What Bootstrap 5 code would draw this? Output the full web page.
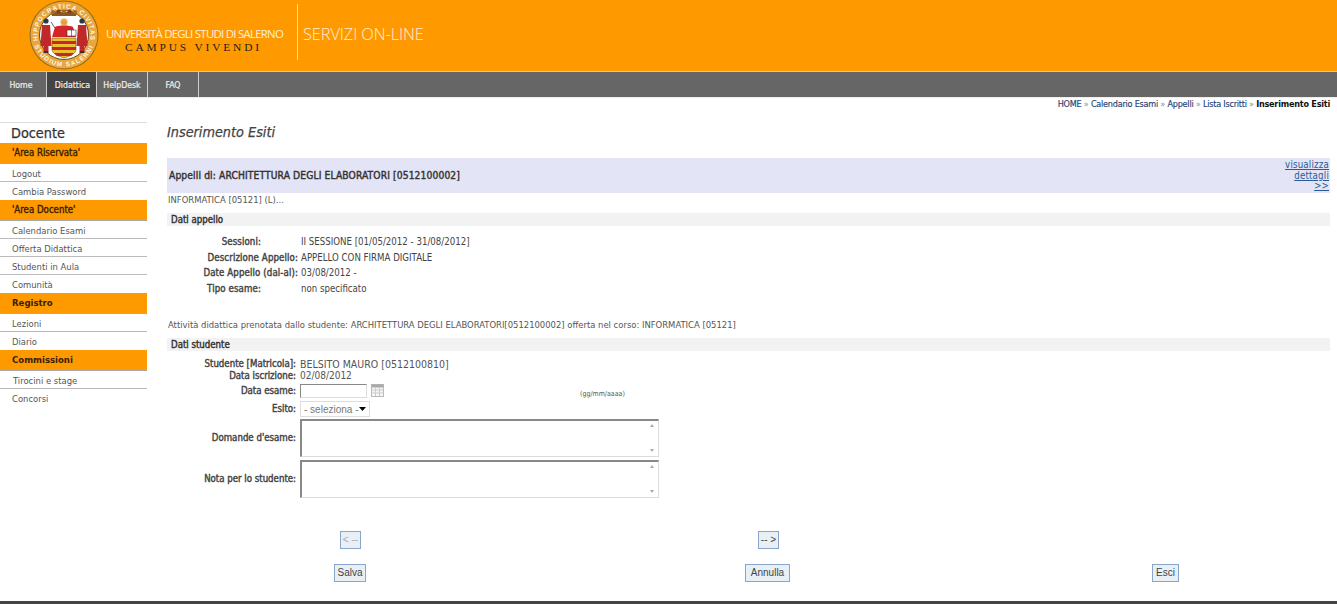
<!DOCTYPE html>
<html lang="it">
<head>
<meta charset="utf-8">
<title>Inserimento Esiti</title>
<link href="https://cdn.jsdelivr.net/npm/bootstrap@5.3.0/dist/css/bootstrap.min.css" rel="stylesheet">
<style>
html,body{height:604px;overflow:hidden}
body{font-family:"DejaVu Sans Condensed","DejaVu Sans",sans-serif;font-stretch:condensed;font-size:9.5px;line-height:1.2;color:#444;background:#fff;position:relative}
.site-head{height:71px;background:#f90;color:#fff0d6}
.crest{width:70px;height:70px;margin-left:29px;flex:none}
.uni-block{margin-left:7px;margin-top:7px;width:177px}
.uni-name{font-family:"Open Sans","Liberation Sans",sans-serif;font-stretch:normal;font-size:11.4px;line-height:14px;letter-spacing:-.72px;white-space:nowrap;font-weight:400}
.uni-motto{font-family:"Liberation Serif",serif;font-stretch:normal;font-size:11.4px;line-height:13px;letter-spacing:2.85px;color:#222;text-align:center;white-space:nowrap;padding-right:2px}
.head-rule{width:1px;height:56px;background:#ffdca6;margin:4px 5px 0 14px}
.service{font-family:"Open Sans","Liberation Sans",sans-serif;font-stretch:normal;font-size:16.4px;font-weight:300;margin-top:24px;letter-spacing:-.1px;white-space:nowrap}
.top-nav{height:27px;background:#666;border-top:1px solid #d8c9b0;border-bottom:1px solid #eee}
.top-nav .nav-link{height:25px;width:51px;padding:8px 0 0;text-align:center;color:#eee;font-size:8.7px;border-right:1px solid #ccc;-webkit-text-stroke:.2px #eee}
.top-nav .nav-link.first-tab{width:47px;padding-right:4px}
.top-nav .nav-link.active{background:#444;color:#eee;width:50px;padding-left:2px}
.crumbs{height:12px;padding-right:7px;font-size:9px;line-height:12px;text-align:right;color:#889;letter-spacing:-.22px;margin-top:0}
.crumbs a{color:#1f3f73;text-decoration:none;-webkit-text-stroke:.15px #1f3f73}
.crumbs b{color:#111}
.page-body{margin-top:12px}
.side{width:147px;flex:none;border-top:1px solid #ddd}
.side-title{height:20px;padding-left:11px;font-size:14.3px;line-height:20px;color:#333;-webkit-text-stroke:.25px #333}
.side-head{height:21px;padding:4px 0 0 12px;background:#f90;color:#3a2000;font-weight:700;font-size:9.5px;border-bottom:1px solid #aaa;line-height:12px}
.side-head.quoted{font-weight:400;-webkit-text-stroke:.35px #3a2000;font-size:9.6px}
.side-link{display:block;height:18px;padding:4px 0 0 12px;color:#555;text-decoration:none;font-size:9.4px;line-height:11px;border-bottom:1px solid #bbb}
.side-link.plain{border-bottom:0}
.side-link.shift{padding-left:13px}
.main-col{width:1163px;margin-left:20px}
.page-title{height:36px;font-size:14.3px;font-style:italic;line-height:21px;color:#444;-webkit-text-stroke:.25px #444}
.band{height:35px;background:#e3e4f5;padding-left:2px}
.band-title{font-size:10.2px;color:#333;padding-top:11px;line-height:13px;letter-spacing:.13px;-webkit-text-stroke:.4px #333}
.band-more{text-align:right;font-size:9.6px;line-height:10.7px;color:#2a5a96;padding:2px 1px 0 0;letter-spacing:.2px}
.band-more a{color:#2a5a96}
.course{height:20px;padding:0 0 0 1px;line-height:13px;font-size:9.4px;color:#555}
.sect{height:13px;background:#f2f2f2;padding-left:4px;color:#333;line-height:13px;font-size:9.6px;-webkit-text-stroke:.4px #333}
.rows-a{padding-top:8px}
.info-row{display:flex;height:15.7px;line-height:15.7px;font-size:9.6px;color:#444}
.info-row .lab{width:131px;text-align:right;color:#444;flex:none;letter-spacing:.12px;-webkit-text-stroke:.4px #444}
.info-row .lab.pad{padding-right:37px}
.info-row .val{margin-left:3px}
.long-line{margin-top:21px;height:20px;padding-left:1px;line-height:13px;font-size:9.4px;color:#555}
.first-form-row{margin-top:7px}
.form-lab{width:129px;flex:none;text-align:right;color:#444;font-size:9.6px;line-height:12px;-webkit-text-stroke:.4px #444}
.form-val{margin-left:4px;font-size:10.5px;color:#555;line-height:12px}
.form-val.small-val{font-size:10px}
.date-in{width:67px;height:14px;border:1px solid #888;border-right-color:#ddd;border-bottom-color:#ddd;background:#fff;display:block;padding:0}
.sel-in{width:70px;height:16px;border:1px solid #ddd;background:#fff url("data:image/svg+xml,%3Csvg xmlns='http://www.w3.org/2000/svg' width='7' height='4'%3E%3Cpath d='M0 0h7L3.500 4z' fill='%23000'/%3E%3C/svg%3E") no-repeat right 3px center;font:10px "Liberation Sans",sans-serif;color:#777;padding:0 0 0 3px;display:block;appearance:none;-webkit-appearance:none;border-radius:0}
.area-wrap{position:relative;width:359px}
.area-in{width:359px;height:38px;border:2px solid #888;border-right:1px solid #ddd;border-bottom:1px solid #ddd;display:block;background:#fff;padding:0;resize:none;border-radius:0}
.sb-up,.sb-down{position:absolute;right:5px;width:0;height:0;border-left:2.5px solid transparent;border-right:2.5px solid transparent}
.sb-up{top:5px;border-bottom:3px solid #aaa}
.sb-down{bottom:5px;border-top:3px solid #aaa}
.fmt{font-size:7px;color:#555;margin-left:196px;padding-top:6px}
.cal{margin-left:4px;margin-top:-2px}
.nav-btn{border:1px solid #8aa5cc;background:#e8f0f6;color:#444;font:10px "Liberation Sans",sans-serif;height:18px;padding:0;display:block;border-radius:0}
.nav-btn[disabled]{color:#aaa;border-color:#8aa5cc;background:#e8f0f6}
.btn-a{width:21px}.btn-b{width:32px}.btn-c{width:45px}.btn-d{width:27px}
.row-a{padding-left:173px;margin-top:31px}
.gap-a{width:397px;flex:none}
.row-b{padding-left:167px;margin-top:15px}
.gap-b{width:379px;flex:none}
.gap-c{width:362px;flex:none}
.foot-line{height:3px;background:#444;position:absolute;left:0;right:0;top:601px}
</style>
</head>
<body>
<header class="site-head d-flex">
<svg class="crest" viewBox="0 0 70 70" role="img" aria-label="Stemma">
<defs><path id="arcTop" d="M12.050 48.250A26.500 26.500 0 1 1 57.950 48.250"/><path id="arcBot" d="M3.500 35A31.500 31.500 0 0 0 66.500 35"/></defs>
<circle cx="35" cy="35" r="34.5" fill="#8f6a20"/>
<circle cx="35" cy="35" r="33.500" fill="#e8a63c"/>
<circle cx="35" cy="35" r="24.5" fill="#fff" stroke="#6a4c18" stroke-width="1"/>
<text font-family="Liberation Sans,sans-serif" font-size="6.4" font-weight="700" fill="#fff6e4" letter-spacing="1" text-anchor="middle" style="font-stretch:normal"><textPath href="#arcTop" startOffset="50%">HIPPOCRATICA CIVITAS</textPath></text>
<text font-family="Liberation Sans,sans-serif" font-size="6.4" font-weight="700" fill="#fff6e4" letter-spacing="1.2" text-anchor="middle" style="font-stretch:normal"><textPath href="#arcBot" startOffset="50%">STUDIUM SALERNI</textPath></text>
<path d="M22 12h26l-1 4H23z" fill="#8a5a20"/>
<circle cx="24" cy="12" r="2" fill="#a8692a"/><circle cx="29.500" cy="11.500" r="2" fill="#8a3a20"/><circle cx="35" cy="11.500" r="2" fill="#a8692a"/><circle cx="40.500" cy="11.500" r="2" fill="#8a3a20"/><circle cx="46" cy="12" r="2" fill="#a8692a"/>
<circle cx="17" cy="21" r="2.600" fill="#2a3a4a"/><path d="M13 25h8l1.500 21h-3v5h-5v-5h-3z" fill="#c0282a"/><path d="M14.500 51h5v2h-5z" fill="#333"/>
<circle cx="53" cy="21" r="2.600" fill="#2a3a4a"/><path d="M49 25h8l1.500 21h-3v5h-5v-5h-3z" fill="#c0282a"/><path d="M50.500 51h5v2h-5z" fill="#333"/>
<circle cx="35" cy="22" r="3.600" fill="#e8b23a"/><circle cx="35" cy="22.500" r="2.100" fill="#d99a6a"/>
<path d="M26 27c3-2 15-2 18 0l3 10H23z" fill="#d4262a"/>
<path d="M38 30h9v6h-9z" fill="#fff" stroke="#333" stroke-width=".6"/><path d="M42.500 30v6" stroke="#333" stroke-width=".6"/>
<path d="M26 28l-4-6" stroke="#666" stroke-width="1"/>
<path d="M23 38h24v11c0 5-6 7-12 9-6-2-12-4-12-9z" fill="#e9c22e" stroke="#6a5a20" stroke-width=".6"/>
<path d="M23 41h24v3H23zM23 47h24v3H23zM25 53h20l-3 3H28z" fill="#c8242a"/>
</svg>
<div class="uni-block">
<div class="uni-name mt-3 pt-1">UNIVERSITÀ DEGLI STUDI DI SALERNO</div>
<div class="uni-motto">CAMPUS VIVENDI</div>
</div>
<div class="head-rule"></div>
<div class="service">SERVIZI ON-LINE</div>
</header>
<nav class="top-nav nav">
<a class="nav-link first-tab" href="#">Home</a>
<a class="nav-link active" href="#">Didattica</a>
<a class="nav-link" href="#">HelpDesk</a>
<a class="nav-link" href="#">FAQ</a>
</nav>
<div class="crumbs"><a href="#">HOME</a> » <a href="#">Calendario Esami</a> » <a href="#">Appelli</a> » <a href="#">Lista Iscritti</a> » <b>Inserimento Esiti</b></div>
<div class="page-body d-flex">
<aside class="side">
<div class="side-title">Docente</div>
<div class="side-head quoted">'Area Riservata'</div>
<a class="side-link" href="#">Logout</a>
<a class="side-link plain" href="#">Cambia Password</a>
<div class="side-head quoted">'Area Docente'</div>
<a class="side-link" href="#">Calendario Esami</a>
<a class="side-link" href="#">Offerta Didattica</a>
<a class="side-link" href="#">Studenti in Aula</a>
<a class="side-link plain" href="#">Comunità</a>
<div class="side-head">Registro</div>
<a class="side-link" href="#">Lezioni</a>
<a class="side-link plain" href="#">Diario</a>
<div class="side-head">Commissioni</div>
<a class="side-link shift" href="#">Tirocini e stage</a>
<a class="side-link plain" href="#">Concorsi</a>
</aside>
<main class="main-col">
<div class="page-title">Inserimento Esiti</div>
<div class="band d-flex justify-content-between">
<div class="band-title">Appelli di: ARCHITETTURA DEGLI ELABORATORI [0512100002]</div>
<div class="band-more"><a href="#">visualizza<br>dettagli<br>&gt;&gt;</a></div>
</div>
<div class="course">INFORMATICA [05121] (L)...</div>
<div class="sect">Dati appello</div>
<div class="rows-a">
<div class="info-row"><div class="lab pad">Sessioni:</div><div class="val">II SESSIONE [01/05/2012 - 31/08/2012]</div></div>
<div class="info-row"><div class="lab">Descrizione Appello:</div><div class="val">APPELLO CON FIRMA DIGITALE</div></div>
<div class="info-row"><div class="lab">Date Appello (dal-al):</div><div class="val">03/08/2012 -</div></div>
<div class="info-row"><div class="lab pad">Tipo esame:</div><div class="val">non specificato</div></div>
</div>
<div class="long-line">Attività didattica prenotata dallo studente: ARCHITETTURA DEGLI ELABORATORI[0512100002] offerta nel corso: INFORMATICA [05121]</div>
<div class="sect">Dati studente</div>
<div class="d-flex align-items-center first-form-row" style="height:12px"><div class="form-lab">Studente [Matricola]:</div><div class="form-val">BELSITO MAURO [0512100810]</div></div>
<div class="d-flex align-items-center" style="height:12px"><div class="form-lab">Data iscrizione:</div><div class="form-val small-val">02/08/2012</div></div>
<div class="d-flex align-items-center" style="height:19px"><div class="form-lab">Data esame:</div><div class="form-val"><input class="date-in" type="text" aria-label="Data esame"></div>
<svg class="cal" width="13" height="13" viewBox="0 0 13 13"><rect x=".5" y=".5" width="12" height="12" fill="#f6f6f6" stroke="#bbb"/><rect x=".5" y=".5" width="12" height="3" fill="#aaa"/><path d="M1 6h11M1 9h11M4.500 4v8M8.500 4v8" stroke="#ccc"/></svg>
<div class="fmt">(gg/mm/aaaa)</div></div>
<div class="d-flex align-items-center" style="height:17px"><div class="form-lab">Esito:</div><div class="form-val"><select class="sel-in" aria-label="Esito"><option>- seleziona -</option></select></div></div>
<div class="d-flex align-items-center" style="height:41px"><div class="form-lab">Domande d'esame:</div><div class="form-val"><div class="area-wrap"><textarea class="area-in" aria-label="Domande d'esame"></textarea><span class="sb-up"></span><span class="sb-down"></span></div></div></div>
<div class="d-flex align-items-center" style="height:41px"><div class="form-lab">Nota per lo studente:</div><div class="form-val"><div class="area-wrap"><textarea class="area-in" aria-label="Nota per lo studente"></textarea><span class="sb-up"></span><span class="sb-down"></span></div></div></div>
<div class="d-flex row-a"><button class="nav-btn btn-a" disabled>&lt; --</button><div class="gap-a"></div><button class="nav-btn btn-a">-- &gt;</button></div>
<div class="d-flex row-b"><button class="nav-btn btn-b">Salva</button><div class="gap-b"></div><button class="nav-btn btn-c">Annulla</button><div class="gap-c"></div><button class="nav-btn btn-d">Esci</button></div>
</main>
</div>
<div class="foot-line"></div>
<script src="https://cdn.jsdelivr.net/npm/bootstrap@5.3.0/dist/js/bootstrap.bundle.min.js"></script>
</body>
</html>
